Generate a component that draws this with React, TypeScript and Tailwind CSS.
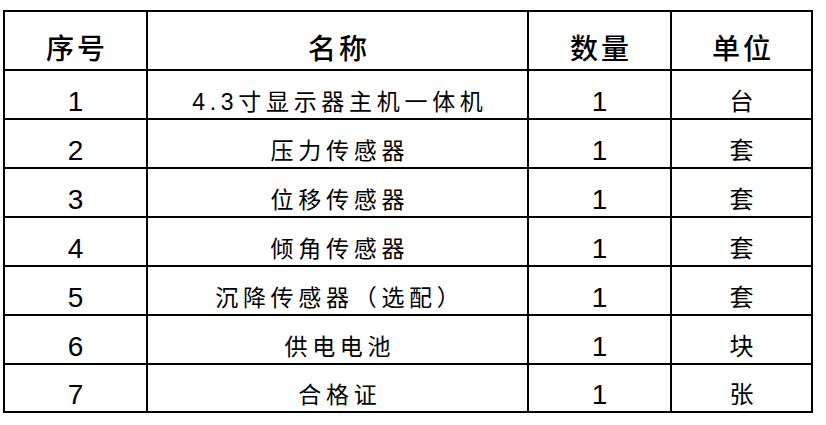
import React from "react";

const rows: [string, string, string, string][] = [
  ["1", "4.3寸显示器主机一体机", "1", "台"],
  ["2", "压力传感器", "1", "套"],
  ["3", "位移传感器", "1", "套"],
  ["4", "倾角传感器", "1", "套"],
  ["5", "沉降传感器（选配）", "1", "套"],
  ["6", "供电电池", "1", "块"],
  ["7", "合格证", "1", "张"],
];

export default function App() {
  const font = { fontFamily: '"Liberation Sans", "Noto Sans CJK SC", sans-serif' };
  return (
    <div className="w-[826px] h-[425px] bg-white pt-[10px] pl-[3px]" style={font}>
      <table className="table-fixed border-collapse w-[810px] text-black">
        <colgroup>
          <col className="w-[143px]" />
          <col className="w-[381px]" />
          <col className="w-[143px]" />
          <col className="w-[141px]" />
        </colgroup>
        <thead>
          <tr className="h-[59px]">
            {["序号", "名称", "数量", "单位"].map((h) => (
              <th
                key={h}
                className="border-2 border-black align-bottom text-center p-0 pb-[5px] text-[28px] leading-none font-medium tracking-[3px] indent-[3px]"
              >
                {h}
              </th>
            ))}
          </tr>
        </thead>
        <tbody>
          {rows.map((r, i) => (
            <tr key={i} className={i === rows.length - 1 ? "h-[48px]" : "h-[49px]"}>
              <td className="border-2 border-black align-bottom text-center p-0 pb-[2px] text-[28px] leading-none">
                {r[0]}
              </td>
              <td className="border-2 border-black align-bottom text-center p-0 pb-[4px] text-[23px] leading-none tracking-[4.7px] indent-[4.7px]">
                {r[1]}
              </td>
              <td className="border-2 border-black align-bottom text-center p-0 pb-[2px] text-[28px] leading-none">
                {r[2]}
              </td>
              <td className="border-2 border-black align-bottom text-center p-0 pb-[4px] text-[24px] leading-none">
                {r[3]}
              </td>
            </tr>
          ))}
        </tbody>
      </table>
    </div>
  );
}
